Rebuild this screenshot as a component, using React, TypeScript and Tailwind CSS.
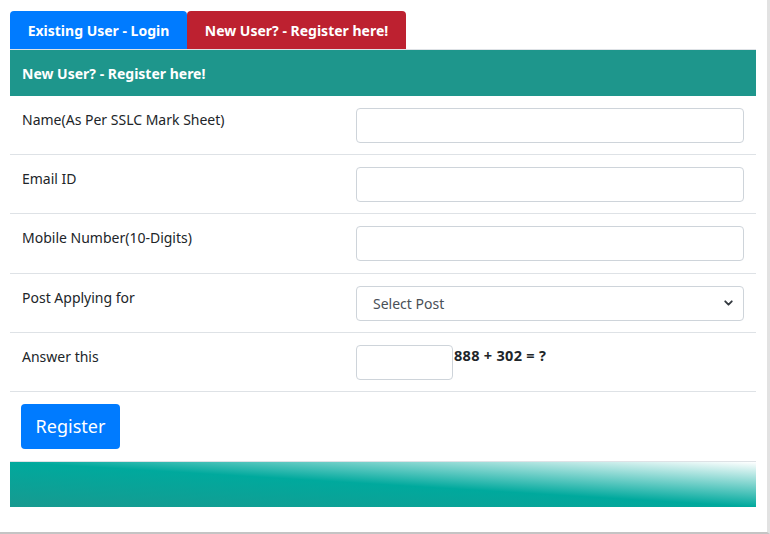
import { ChevronDown } from 'lucide-react';

const font = { fontFamily: '"Noto Sans", "Open Sans", sans-serif' };

function FieldRow({ label, children }: { label: string; children: React.ReactNode }) {
  return (
    <div className="flex border-b border-[#dee2e6]">
      <div className="w-[334px] shrink-0 pl-3 pt-[13px] pb-[10.2px] text-[14px] leading-[21px] text-[#212529]">
        {label}
      </div>
      <div className="flex-1 px-3 pt-3 pb-[11.2px]">{children}</div>
    </div>
  );
}

function TextInput({ className = 'w-full' }: { className?: string }) {
  return (
    <input
      type="text"
      className={`${className} h-[35px] rounded-[4px] border border-[#ced4da] bg-white px-3 outline-none`}
    />
  );
}

export default function App() {
  return (
    <div
      className="h-[534px] w-[770px] border-r-[3px] border-b-2 border-r-[#e2e2e2] border-b-[#c4c4c4] bg-white"
      style={font}
    >
      <div className="ml-[10px] w-[746px] pt-[11px]">
        {/* tabs */}
        <div className="flex border-b border-[#dee2e6]">
          <button className="h-[38px] w-[177px] rounded-t-[4px] bg-[#007bff] text-[14px] font-bold text-white">
            Existing User - Login
          </button>
          <button className="h-[38px] w-[219px] rounded-t-[4px] bg-[#bd2130] text-[14px] font-bold text-white">
            New User? - Register here!
          </button>
        </div>

        <div className="flex h-[46px] items-center bg-[#1e968c] px-3 text-[14px] font-bold text-white">
          New User? - Register here!
        </div>

        <FieldRow label="Name(As Per SSLC Mark Sheet)">
          <TextInput />
        </FieldRow>
        <FieldRow label="Email ID">
          <TextInput />
        </FieldRow>
        <FieldRow label="Mobile Number(10-Digits)">
          <TextInput />
        </FieldRow>
        <FieldRow label="Post Applying for">
          <div className="relative">
            <select className="h-[35px] w-full appearance-none rounded-[4px] border border-[#ced4da] bg-white pl-4 text-[14px] text-[#495057] outline-none">
              <option>Select Post</option>
            </select>
            <ChevronDown
              className="pointer-events-none absolute top-1/2 right-[9px] -translate-y-1/2 text-[#343a40]"
              size={13}
              strokeWidth={3.5}
            />
          </div>
        </FieldRow>
        <FieldRow label="Answer this">
          <div className="flex items-start">
            <TextInput className="w-[97px]" />
            <span className="pl-[1px] text-[14.5px] leading-[21px] font-bold tracking-[0.3px] text-[#212529]">
              888 + 302 = ?
            </span>
          </div>
        </FieldRow>

        <div className="border-b border-[#dee2e6] px-[11px] pt-3 pb-3">
          <button className="h-[45px] w-[99px] rounded-[4px] bg-[#007bff] text-[18px] text-white">
            Register
          </button>
        </div>

        <div className="h-[45px] bg-[linear-gradient(to_right_top,#179a90_0%,#00a99d_50%,#ffffff_100%)]" />
      </div>
    </div>
  );
}
